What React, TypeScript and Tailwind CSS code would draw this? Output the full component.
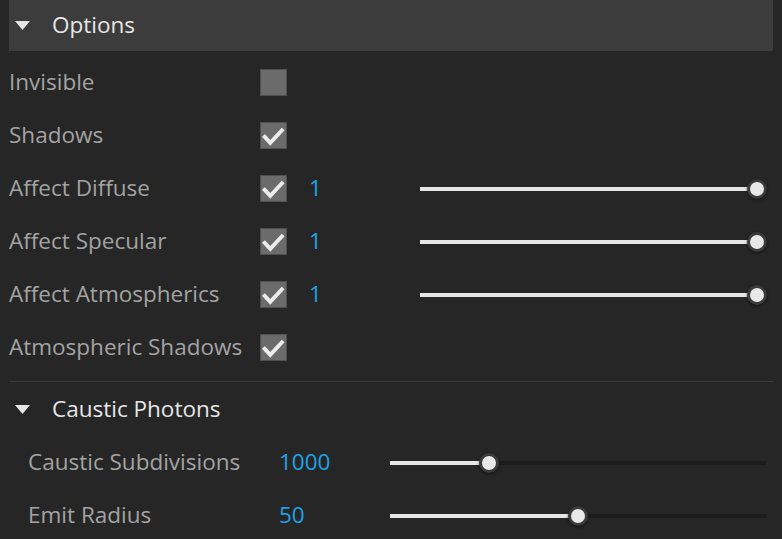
import React from 'react'

const FONT = { fontFamily: '"Open Sans", "Noto Sans", sans-serif' }

function Caret() {
  return (
    <svg width="15" height="9" viewBox="0 0 15 9" className="shrink-0">
      <path d="M0 0 L15 0 L7.5 9 Z" fill="#e6e6e6" />
    </svg>
  )
}

function Check({ checked }: { checked: boolean }) {
  return (
    <div className="w-[27px] h-[27px] shrink-0 bg-[#6b6b6b] border border-[#505050] flex items-center justify-center">
      {checked && (
        <svg width="27" height="27" viewBox="0 0 27 27">
          <path d="M4 15 L10 21.5 L22.5 8" stroke="#ececec" strokeWidth="4.2" fill="none" strokeLinecap="square" />
        </svg>
      )}
    </div>
  )
}

function Slider({ pct, width, fillAll }: { pct: number; width: string; fillAll?: boolean }) {
  return (
    <div className={`relative h-[4px] ${width} ${fillAll ? 'bg-[#e6e6e6]' : 'bg-[#1c1c1c]'}`}>
      <div className="absolute left-0 top-0 h-full bg-[#e6e6e6]" style={{ width: `${pct}%` }} />
      <div
        className="absolute top-1/2 w-[20px] h-[20px] -translate-x-1/2 -translate-y-1/2 rounded-full bg-[#e8e8e8] border-[3px] border-[#3a3a3a] shadow-[0_1px_3px_rgba(0,0,0,0.6)]"
        style={{ left: `${pct}%` }}
      />
    </div>
  )
}

type Row = { label: string; checked: boolean; value?: string }

const rows: Row[] = [
  { label: 'Invisible', checked: false },
  { label: 'Shadows', checked: true },
  { label: 'Affect Diffuse', checked: true, value: '1' },
  { label: 'Affect Specular', checked: true, value: '1' },
  { label: 'Affect Atmospherics', checked: true, value: '1' },
  { label: 'Atmospheric Shadows', checked: true },
]

const caustic = [
  { label: 'Caustic Subdivisions', value: '1000', pct: 26.3 },
  { label: 'Emit Radius', value: '50', pct: 50 },
]

export default function App() {
  return (
    <div className="w-[782px] h-[539px] bg-[#262626] overflow-hidden text-[22.5px] leading-none" style={FONT}>
      <div className="ml-[9px] w-[764px] h-[51px] bg-[#3c3c3c] flex items-center">
        <div className="ml-[6px] mr-[22px] flex items-center"><Caret /></div>
        <span className="text-[#e6e6e6]">Options</span>
      </div>

      <div className="pt-[5px]">
        {rows.map((r) => (
          <div key={r.label} className="h-[53px] pl-[9px] flex items-center">
            <span className="w-[251px] shrink-0 text-[#a3a3a3]">{r.label}</span>
            <Check checked={r.checked} />
            {r.value && (
              <>
                <span className="ml-[22px] w-[111px] shrink-0 text-[#1ea2e6]">{r.value}</span>
                <Slider pct={100} width="w-[337px]" fillAll />
              </>
            )}
          </div>
        ))}
      </div>

      <div className="mt-[7px] ml-[9px] w-[764px] h-px bg-[#3a3a3a]" />

      <div className="h-[54px] flex items-center">
        <div className="ml-[15px] mr-[22px] flex items-center"><Caret /></div>
        <span className="text-[#e6e6e6]">Caustic Photons</span>
      </div>

      {caustic.map((c) => (
        <div key={c.label} className="h-[53px] pl-[28px] flex items-center">
          <span className="w-[251px] shrink-0 text-[#a3a3a3]">{c.label}</span>
          <span className="w-[111px] shrink-0 text-[#1ea2e6]">{c.value}</span>
          <Slider pct={c.pct} width="w-[376px]" />
        </div>
      ))}
    </div>
  )
}
